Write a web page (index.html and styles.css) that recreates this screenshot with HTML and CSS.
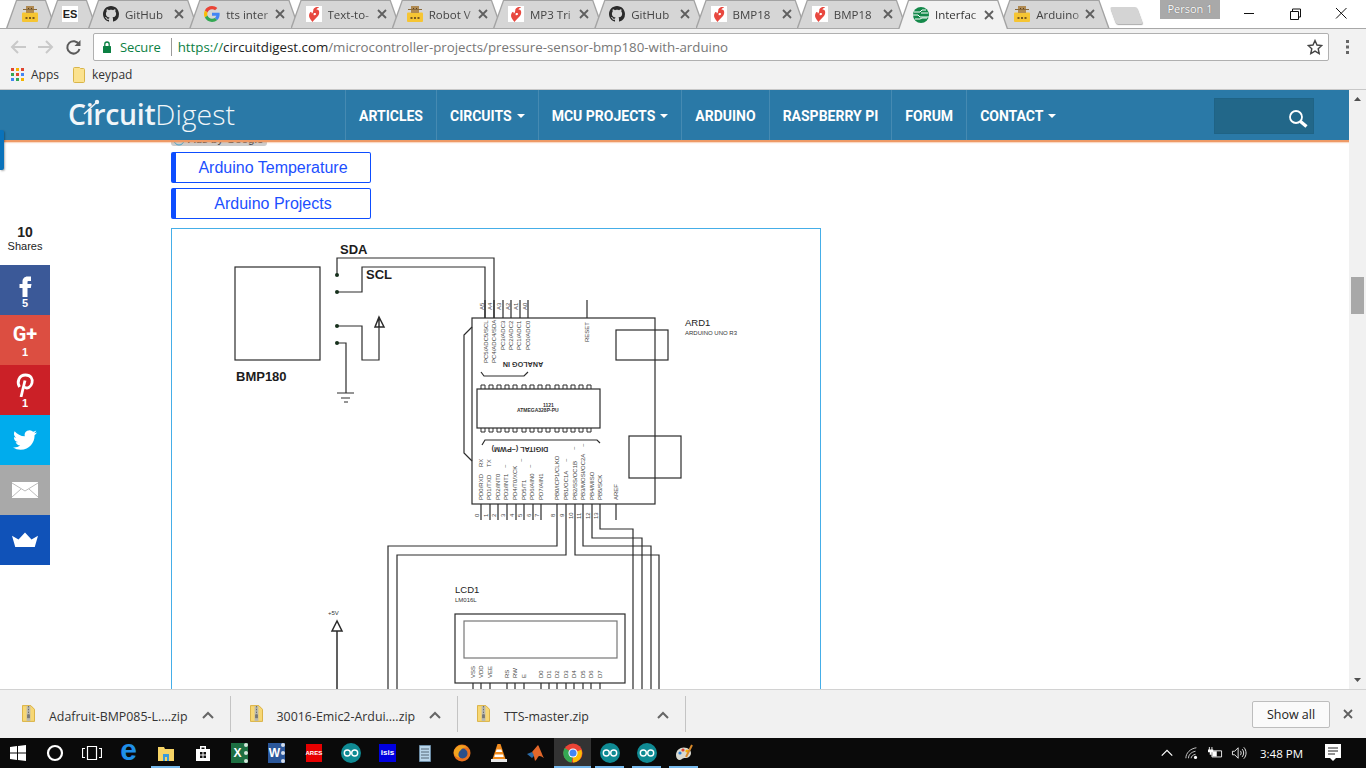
FILE: index.html
```html
<!DOCTYPE html>
<html lang="en">
<head>
<meta charset="utf-8">
<title>Interfacing BMP180</title>
<link rel="stylesheet" href="styles.css">
</head>
<body>
<svg class="defs" width="0" height="0" aria-hidden="true">
  <symbol id="i-robot" viewBox="0 0 16 16">
    <rect x="0" y="6.500" width="16" height="9.500" rx="1" fill="#f6c533"/>
    <rect x="4" y="0" width="8" height="7" fill="#b08a52"/>
    <rect x="1" y="3" width="14" height="1" fill="#8a6a3a"/>
    <rect x="6" y="2" width="1" height="1" fill="#5a4020"/><rect x="9" y="2" width="1" height="1" fill="#5a4020"/>
    <rect x="3.500" y="11" width="2" height="2" fill="#7a5a20"/><rect x="7" y="11" width="2" height="2" fill="#7a5a20"/><rect x="10.500" y="11" width="2" height="2" fill="#7a5a20"/>
  </symbol>
  <symbol id="i-gh" viewBox="0 0 16 16">
    <path fill="#2b2b2b" d="M8 0C3.58 0 0 3.58 0 8c0 3.54 2.29 6.53 5.47 7.59.4.07.55-.17.55-.38 0-.19-.01-.82-.01-1.49-2.01.37-2.53-.49-2.69-.94-.09-.23-.48-.94-.82-1.13-.28-.15-.68-.52-.01-.53.63-.01 1.08.58 1.23.82.72 1.21 1.87.87 2.33.66.07-.52.28-.87.51-1.07-1.78-.2-3.64-.89-3.64-3.95 0-.87.31-1.59.82-2.15-.08-.2-.36-1.02.08-2.12 0 0 .67-.21 2.2.82.64-.18 1.32-.27 2-.27.68 0 1.36.09 2 .27 1.53-1.04 2.2-.82 2.2-.82.44 1.1.16 1.92.08 2.12.51.56.82 1.27.82 2.15 0 3.07-1.87 3.75-3.65 3.95.29.25.54.73.54 1.48 0 1.07-.01 1.93-.01 2.2 0 .21.15.46.55.38A8.013 8.013 0 0016 8c0-4.42-3.58-8-8-8z"/>
  </symbol>
  <symbol id="i-google" viewBox="0 0 48 48">
    <path fill="#EA4335" d="M24 9.5c3.54 0 6.71 1.22 9.21 3.6l6.85-6.85C35.9 2.38 30.47 0 24 0 14.62 0 6.51 5.38 2.56 13.22l7.98 6.19C12.43 13.72 17.74 9.5 24 9.5z"/>
    <path fill="#4285F4" d="M46.98 24.55c0-1.57-.15-3.09-.38-4.55H24v9.02h12.94c-.58 2.96-2.26 5.48-4.78 7.18l7.73 6c4.51-4.18 7.09-10.36 7.09-17.65z"/>
    <path fill="#FBBC05" d="M10.53 28.59c-.48-1.45-.76-2.99-.76-4.59s.27-3.14.76-4.59l-7.98-6.19C.92 16.46 0 20.12 0 24c0 3.88.92 7.54 2.56 10.78l7.97-6.19z"/>
    <path fill="#34A853" d="M24 48c6.48 0 11.93-2.13 15.89-5.81l-7.73-6c-2.15 1.45-4.92 2.3-8.16 2.3-6.26 0-11.57-4.22-13.47-9.91l-7.98 6.19C6.51 42.62 14.62 48 24 48z"/>
  </symbol>
  <symbol id="i-spark" viewBox="0 0 16 16">
    <rect width="16" height="16" fill="#fff"/>
    <path fill="#e8483f" d="M6.5 16C4.5 13 2 11 3.5 7.5 4.3 5.6 5.6 5.6 5.8 7.4 7 7.2 7.2 5 7.4 3.2 8.6 1 11.4.8 13 1.2c-.9 1-2.6 1.2-2.6 2.4 1.5-.3 2.8.7 2.8 2.8 0 3.6-3.4 5.2-6.7 9.6z"/>
    <path fill="#fff" d="M7.6 7.5c1-.8 2.4-.5 2.4.6 0 1.2-1.8 1.5-2.4.9z"/>
  </symbol>
  <symbol id="i-globe" viewBox="0 0 16 16">
    <circle cx="8" cy="8" r="8" fill="#14894a"/>
    <path fill="none" stroke="#fff" stroke-width="1" d="M1 5h6l2-2h4M0 8h5l2 2h9M2 12h5l2-1h5M8 6h7"/>
  </symbol>
  <symbol id="i-x" viewBox="0 0 10 10">
    <path fill="none" stroke="#5f5f5f" stroke-width="1.8" d="M1 1l8 8M9 1l-8 8"/>
  </symbol>
  <symbol id="i-zip" viewBox="0 0 14 18">
    <path fill="#f7d774" stroke="#d8ae3c" d="M.5.5h9l4 4v13H.5z"/>
    <rect x="5" y="1" width="4" height="16" fill="#b9b9b0"/>
    <path stroke="#666" stroke-dasharray="1.5 1.5" d="M7 1v10"/>
    <rect x="5.5" y="10" width="3" height="4" fill="#777"/>
  </symbol>
  <symbol id="i-chev" viewBox="0 0 12 8">
    <path fill="none" stroke="#666" stroke-width="2" d="M1 7l5-5 5 5"/>
  </symbol>
  <symbol id="i-ino" viewBox="0 0 20 20">
    <circle cx="10" cy="10" r="10" fill="#0f8a93"/>
    <circle cx="6.3" cy="10" r="3" fill="none" stroke="#fff" stroke-width="1.4"/>
    <circle cx="13.7" cy="10" r="3" fill="none" stroke="#fff" stroke-width="1.4"/>
  </symbol>
</svg>

<header class="tabstrip">
  <div class="tab tab-mini tab-first"><svg class="fav"><use href="#i-robot"/></svg></div>
  <div class="tab tab-mini"><span class="fav fav-es">ES</span></div>
  <div class="tab"><svg class="fav"><use href="#i-gh"/></svg><span class="tab-title">GitHub</span><svg class="tab-x"><use href="#i-x"/></svg></div>
  <div class="tab"><svg class="fav"><use href="#i-google"/></svg><span class="tab-title">tts inter</span><svg class="tab-x"><use href="#i-x"/></svg></div>
  <div class="tab"><svg class="fav"><use href="#i-spark"/></svg><span class="tab-title">Text-to-</span><svg class="tab-x"><use href="#i-x"/></svg></div>
  <div class="tab"><svg class="fav"><use href="#i-robot"/></svg><span class="tab-title">Robot V</span><svg class="tab-x"><use href="#i-x"/></svg></div>
  <div class="tab"><svg class="fav"><use href="#i-spark"/></svg><span class="tab-title">MP3 Tri</span><svg class="tab-x"><use href="#i-x"/></svg></div>
  <div class="tab"><svg class="fav"><use href="#i-gh"/></svg><span class="tab-title">GitHub</span><svg class="tab-x"><use href="#i-x"/></svg></div>
  <div class="tab"><svg class="fav"><use href="#i-spark"/></svg><span class="tab-title">BMP18</span><svg class="tab-x"><use href="#i-x"/></svg></div>
  <div class="tab"><svg class="fav"><use href="#i-spark"/></svg><span class="tab-title">BMP18</span><svg class="tab-x"><use href="#i-x"/></svg></div>
  <div class="tab tab-active"><svg class="fav"><use href="#i-globe"/></svg><span class="tab-title">Interfac</span><svg class="tab-x"><use href="#i-x"/></svg></div>
  <div class="tab"><svg class="fav"><use href="#i-robot"/></svg><span class="tab-title">Arduino</span><svg class="tab-x"><use href="#i-x"/></svg></div>
  <div class="newtab"></div>
  <div class="person">Person 1</div>
  <div class="winctl">
    <svg class="wc" viewBox="0 0 46 28"><path stroke="#111" d="M18 13.5h10"/></svg>
    <svg class="wc" viewBox="0 0 46 28"><path fill="none" stroke="#111" d="M18.500 11.500h8v8h-8zM20.500 11.500v-2.500h8v8h-2"/></svg>
    <svg class="wc" viewBox="0 0 46 28"><path stroke="#111" d="M18 8l10.500 10.500M28.500 8L18 18.500"/></svg>
  </div>
</header>

<div class="toolbar">
  <svg class="navbtn" viewBox="0 0 27 20"><path fill="none" stroke="#c9c9c9" stroke-width="2" d="M21 10H7M13 4l-6 6 6 6"/></svg>
  <svg class="navbtn" viewBox="0 0 27 20"><path fill="none" stroke="#c9c9c9" stroke-width="2" d="M6 10h14M14 4l6 6-6 6"/></svg>
  <svg class="navbtn navbtn-wide" viewBox="0 0 29 20"><path fill="none" stroke="#5a5a5a" stroke-width="2" d="M20 7.500A6.200 6.200 0 1 0 20.500 12"/><path fill="#5a5a5a" d="M21.500 3v6h-6z"/></svg>
  <div class="omnibox">
    <svg class="lock" viewBox="0 0 8 12"><path fill="none" stroke="#0b8043" stroke-width="1.300" d="M1.800 5V3.200a2.200 2.200 0 0 1 4.400 0V5"/><rect y="5" width="8" height="7" rx=".5" fill="#0b8043"/></svg>
    <span class="secure">Secure</span>
    <span class="omni-sep"></span>
    <span class="url"><span class="url-scheme">https://</span><span class="url-host">circuitdigest.com</span>/microcontroller-projects/pressure-sensor-bmp180-with-arduino</span>
    <svg class="star" viewBox="0 0 16 16"><path fill="none" stroke="#444" stroke-width="1.400" d="M8 1.500l2 4.500 4.800.5-3.600 3.200 1 4.800L8 12.100l-4.200 2.400 1-4.800L1.200 6.500 6 6z"/></svg>
  </div>
  <svg class="menu" viewBox="0 0 37 20"><path fill="#666" d="M17 3h3v3h-3zM17 8.500h3v3h-3zM17 14h3v3h-3z"/></svg>
</div>

<nav class="bookmarks">
  <svg class="apps" viewBox="0 0 13 13">
    <path fill="#e0452f" d="M0 0h3v3H0z"/><path fill="#f4b400" d="M5 0h3v3H5z"/><path fill="#e0452f" d="M10 0h3v3h-3z"/>
    <path fill="#34a853" d="M0 5h3v3H0z"/><path fill="#e0452f" d="M5 5h3v3H5z"/><path fill="#4285f4" d="M10 5h3v3h-3z"/>
    <path fill="#4285f4" d="M0 10h3v3H0z"/><path fill="#34a853" d="M5 10h3v3H5z"/><path fill="#f4b400" d="M10 10h3v3h-3z"/>
  </svg>
  <span class="bm-label">Apps</span>
  <svg class="folder" viewBox="0 0 12 16"><path fill="#fbe28f" stroke="#d9b54a" d="M.5 1.500c0-.6.4-1 1-1h5l1 1h3c.6 0 1 .4 1 1v12c0 .6-.4 1-1 1h-9c-.6 0-1-.4-1-1z"/></svg>
  <span class="bm-label">keypad</span>
</nav>

<div class="viewport">
  <main class="page">
    <div class="site-header">
      <a class="logo"><svg class="logo-arc" viewBox="0 0 24 18"><path fill="none" stroke="#f1f6f9" stroke-width="1.500" d="M2 16L14 5"/><circle cx="15" cy="4" r="2.200" fill="#f1f6f9"/></svg><b class="logo-a">Circuit</b><span class="logo-b">Digest</span></a>
      <ul class="nav">
        <li>ARTICLES</li>
        <li>CIRCUITS<i class="caret"></i></li>
        <li>MCU PROJECTS<i class="caret"></i></li>
        <li>ARDUINO</li>
        <li>RASPBERRY PI</li>
        <li>FORUM</li>
        <li>CONTACT<i class="caret"></i></li>
      </ul>
      <div class="search">
        <svg class="search-ico" viewBox="0 0 20 20"><circle cx="8" cy="8" r="6" fill="none" stroke="#fff" stroke-width="1.800"/><path stroke="#fff" stroke-width="3.400" d="M12.500 12.500l6 5"/></svg>
      </div>
    </div>

    <div class="side-tab"></div>

    <aside class="share">
      <div class="share-count"><b>10</b><span>Shares</span></div>
      <div class="sbtn s-fb"><svg class="sico" viewBox="0 0 24 24"><path fill="#fff" d="M14.500 8h3.500V3.500h-3.500c-3 0-5 2.200-5 5V11H6.500v4h3v9h5v-9h3.300l.7-4h-4V9c0-.6.3-1 1-1z"/></svg><span class="snum">5</span></div>
      <div class="sbtn s-gp"><span class="gplus">G+</span><span class="snum">1</span></div>
      <div class="sbtn s-pin"><svg class="sico" viewBox="0 0 24 24"><path fill="none" stroke="#fff" stroke-width="2.800" d="M6.500 14C3.500 9 6 2 12.500 2c5.500 0 7.500 4 6.500 8-1 4-5 6.500-7.500 4"/><path fill="none" stroke="#fff" stroke-width="2.800" d="M12 7.500L8 24"/></svg><span class="snum">1</span></div>
      <div class="sbtn s-tw"><svg class="sico-big" viewBox="0 0 24 24"><path fill="#fff" d="M23.953 4.570a10 10 0 01-2.825.775 4.958 4.958 0 002.163-2.723c-.951.555-2.005.959-3.127 1.184a4.920 4.920 0 00-8.384 4.482C7.690 8.095 4.067 6.130 1.640 3.162a4.822 4.822 0 00-.666 2.475c0 1.710.870 3.213 2.188 4.096a4.904 4.904 0 01-2.228-.616v.060a4.923 4.923 0 003.946 4.827 4.996 4.996 0 01-2.212.085 4.936 4.936 0 004.604 3.417 9.867 9.867 0 01-6.102 2.105c-.390 0-.779-.023-1.170-.067a13.995 13.995 0 007.557 2.209c9.053 0 13.998-7.496 13.998-13.985 0-.210 0-.420-.015-.630A9.935 9.935 0 0024 4.590z"/></svg></div>
      <div class="sbtn s-mail"><svg class="sico-big" viewBox="0 0 26 16"><path fill="#fff" d="M0 0h26v16H0z"/><path fill="none" stroke="#bbb" d="M0 1l13 8 13-8M0 15l9-8M26 15l-9-8"/></svg></div>
      <div class="sbtn s-crown"><svg class="sico-big" viewBox="0 0 24 16"><path fill="#fff" d="M0 4l6 3.500L12 1l6 6.500L24 4l-3 10.500H3z"/></svg></div>
    </aside>

    <div class="content">
      <div class="ad-chip"><svg class="ad-i" viewBox="0 0 12 12"><circle cx="6" cy="6" r="5" fill="none" stroke="#4aa3c8"/></svg>Ads by Google</div>
      <a class="ad-btn">Arduino Temperature</a>
      <a class="ad-btn">Arduino Projects</a>
      <figure class="schematic">
        <svg class="sch" viewBox="172 229 648 470" width="648" height="470">
          <g class="w">
            <rect x="235" y="267" width="85" height="93"/>
            <path d="M337 275V258H494V318M337 292H362V267H485V318"/>
            <path d="M337 326H362V360H379V326M337 343H346V393"/>
            <path d="M337 393H354M341 398H350M344 402H348"/>
            <path class="heavy" d="M379 317L375 327H384ZM379 317V327"/>
            <rect x="472" y="318" width="183" height="186"/>
            <path d="M472 327L464 335V453L472 461"/>
            <rect x="616" y="330" width="52" height="30"/>
            <rect x="629" y="436" width="52" height="42"/>
            <rect x="477" y="389" width="123" height="39"/>
            <path class="thin" d="M481 389v-4h4v4M489 389v-4h4v4M497 389v-4h4v4M505 389v-4h4v4M513 389v-4h4v4M522 389v-4h4v4M530 389v-4h4v4M538 389v-4h4v4M546 389v-4h4v4M555 389v-4h4v4M563 389v-4h4v4M571 389v-4h4v4M579 389v-4h4v4M587 389v-4h4v4"/>
            <path class="thin" d="M481 428v4h4v-4M489 428v4h4v-4M497 428v4h4v-4M505 428v4h4v-4M513 428v4h4v-4M522 428v4h4v-4M530 428v4h4v-4M538 428v4h4v-4M546 428v4h4v-4M555 428v4h4v-4M563 428v4h4v-4M571 428v4h4v-4M579 428v4h4v-4M587 428v4h4v-4"/>
            <path d="M481 372L484 376H524L528 372M482 445L485 440H597L600 443"/>
            <path d="M503 300V318M511 300V318M520 300V318M528 300V318M587 300V318"/>
            <path d="M485 300V318M494 300V318"/>
            <path d="M481 504V520M490 504V520M498 504V520M507 504V520M516 504V520M524 504V520M533 504V520M541 504V520M616 504V520"/>
            <path d="M600 504V529H633V699M592 504V538H642V699M583 504V546H651V699M575 504V555H659V699"/>
            <path d="M557 504V546H388V699M566 504V555H397V699"/>
            <rect x="455" y="614" width="170" height="69"/>
            <rect class="grey" x="464" y="621" width="153" height="37"/>
            <path d="M473 683V699M481 683V699M490 683V699M507 683V699M515 683V699M524 683V699M541 683V699M549 683V699M557 683V699M566 683V699M574 683V699M583 683V699M591 683V699M600 683V699"/>
            <path class="heavy" d="M337 621L332 631H342ZM337 631V699"/>
          </g>
          <g class="dots">
            <circle cx="337" cy="275" r="2"/><circle cx="337" cy="292" r="2"/><circle cx="337" cy="326" r="2"/><circle cx="337" cy="343" r="2"/>
          </g>
          <g class="lbl-b">
            <text x="340" y="254">SDA</text>
            <text x="366" y="279">SCL</text>
            <text x="236" y="381">BMP180</text>
          </g>
          <g class="lbl-m">
            <text x="685" y="326">ARD1</text>
            <text x="455" y="593">LCD1</text>
          </g>
          <g class="lbl-s">
            <text x="685" y="335">ARDUINO UNO R3</text>
            <text x="455" y="602">LM016L</text>
            <text x="328" y="615">+5V</text>
            <text class="bold" x="517" y="412">ATMEGA328P-PU</text>
            <text class="bold" x="543" y="407">1121</text>
            <text class="bold big" transform="rotate(180 523 364)" x="523" y="366" text-anchor="middle">ANALOG IN</text>
            <text class="bold big" transform="rotate(180 520 449)" x="520" y="451" text-anchor="middle">DIGITAL (~PWM)</text>
          </g>
          <g class="lbl-r">
            <text transform="rotate(-90 484 310)" x="484" y="310">A5</text>
            <text transform="rotate(-90 492 310)" x="492" y="310">A4</text>
            <text transform="rotate(-90 501 310)" x="501" y="310">A3</text>
            <text transform="rotate(-90 510 310)" x="510" y="310">A2</text>
            <text transform="rotate(-90 518 310)" x="518" y="310">A1</text>
            <text transform="rotate(-90 527 310)" x="527" y="310">A0</text>
            <text transform="rotate(-90 488 363)" x="488" y="363">PC5/ADC5/SCL</text>
            <text transform="rotate(-90 496 363)" x="496" y="363">PC4/ADC4/SDA</text>
            <text transform="rotate(-90 505 350)" x="505" y="350">PC3/ADC3</text>
            <text transform="rotate(-90 513 350)" x="513" y="350">PC2/ADC2</text>
            <text transform="rotate(-90 521 350)" x="521" y="350">PC1/ADC1</text>
            <text transform="rotate(-90 530 350)" x="530" y="350">PC0/ADC0</text>
            <text transform="rotate(-90 589 342)" x="589" y="342">RESET</text>
            <text transform="rotate(-90 483 467)" x="483" y="467">RX</text>
            <text transform="rotate(-90 491 467)" x="491" y="467">TX</text>
            <text transform="rotate(-90 483 500)" x="483" y="500">PD0/RXD</text>
            <text transform="rotate(-90 491 500)" x="491" y="500">PD1/TXD</text>
            <text transform="rotate(-90 500 500)" x="500" y="500">PD2/INT0</text>
            <text transform="rotate(-90 508 500)" x="508" y="500">PD3/INT1</text>
            <text transform="rotate(-90 517 500)" x="517" y="500">PD4/T0/XCK</text>
            <text transform="rotate(-90 526 500)" x="526" y="500">PD5/T1</text>
            <text transform="rotate(-90 534 500)" x="534" y="500">PD6/AIN0</text>
            <text transform="rotate(-90 543 500)" x="543" y="500">PD7/AIN1</text>
            <text transform="rotate(-90 559 500)" x="559" y="500">PB0/ICP1/CLKO</text>
            <text transform="rotate(-90 568 500)" x="568" y="500">PB1/OC1A</text>
            <text transform="rotate(-90 577 500)" x="577" y="500">PB2/SS/OC1B</text>
            <text transform="rotate(-90 585 500)" x="585" y="500">PB3/MOSI/OC2A</text>
            <text transform="rotate(-90 594 500)" x="594" y="500">PB4/MISO</text>
            <text transform="rotate(-90 602 500)" x="602" y="500">PB5/SCK</text>
            <text transform="rotate(-90 618 500)" x="618" y="500">AREF</text>
            <text transform="rotate(-90 507 468)" x="507" y="468">~</text>
            <text transform="rotate(-90 523 462)" x="523" y="462">~</text>
            <text transform="rotate(-90 532 468)" x="532" y="468">~</text>
            <text transform="rotate(-90 568 462)" x="568" y="462">~</text>
            <text transform="rotate(-90 576 450)" x="576" y="450">~</text>
            <text transform="rotate(-90 585 447)" x="585" y="447">~</text>
            <text transform="rotate(-90 479 517)" x="479" y="517">0</text>
            <text transform="rotate(-90 488 517)" x="488" y="517">1</text>
            <text transform="rotate(-90 496 517)" x="496" y="517">2</text>
            <text transform="rotate(-90 505 517)" x="505" y="517">3</text>
            <text transform="rotate(-90 514 517)" x="514" y="517">4</text>
            <text transform="rotate(-90 522 517)" x="522" y="517">5</text>
            <text transform="rotate(-90 531 517)" x="531" y="517">6</text>
            <text transform="rotate(-90 539 517)" x="539" y="517">7</text>
            <text transform="rotate(-90 555 517)" x="555" y="517">8</text>
            <text transform="rotate(-90 564 517)" x="564" y="517">9</text>
            <text transform="rotate(-90 573 519)" x="573" y="519">10</text>
            <text transform="rotate(-90 581 519)" x="581" y="519">11</text>
            <text transform="rotate(-90 590 519)" x="590" y="519">12</text>
            <text transform="rotate(-90 598 519)" x="598" y="519">13</text>
            <text transform="rotate(-90 475 678)" x="475" y="678">VSS</text>
            <text transform="rotate(-90 483 678)" x="483" y="678">VDD</text>
            <text transform="rotate(-90 492 678)" x="492" y="678">VEE</text>
            <text transform="rotate(-90 509 678)" x="509" y="678">RS</text>
            <text transform="rotate(-90 517 678)" x="517" y="678">RW</text>
            <text transform="rotate(-90 526 678)" x="526" y="678">E</text>
            <text transform="rotate(-90 543 678)" x="543" y="678">D0</text>
            <text transform="rotate(-90 551 678)" x="551" y="678">D1</text>
            <text transform="rotate(-90 559 678)" x="559" y="678">D2</text>
            <text transform="rotate(-90 568 678)" x="568" y="678">D3</text>
            <text transform="rotate(-90 576 678)" x="576" y="678">D4</text>
            <text transform="rotate(-90 585 678)" x="585" y="678">D5</text>
            <text transform="rotate(-90 593 678)" x="593" y="678">D6</text>
            <text transform="rotate(-90 602 678)" x="602" y="678">D7</text>
          </g>
        </svg>
      </figure>
    </div>
  </main>
  <div class="scrollbar">
    <svg class="sb-arrow" viewBox="0 0 17 17"><path fill="#505050" d="M5 11l3.500-4 3.500 4z"/></svg>
    <div class="sb-thumb"></div>
    <svg class="sb-arrow sb-down" viewBox="0 0 17 17"><path fill="#505050" d="M5 6l3.500 4 3.500-4z"/></svg>
  </div>
</div>

<footer class="downloads">
  <div class="dl"><svg class="zip"><use href="#i-zip"/></svg><span class="dl-name">Adafruit-BMP085-L....zip</span><svg class="chev"><use href="#i-chev"/></svg></div>
  <div class="dl"><svg class="zip"><use href="#i-zip"/></svg><span class="dl-name">30016-Emic2-Ardui....zip</span><svg class="chev"><use href="#i-chev"/></svg></div>
  <div class="dl"><svg class="zip"><use href="#i-zip"/></svg><span class="dl-name">TTS-master.zip</span><svg class="chev"><use href="#i-chev"/></svg></div>
  <button class="showall">Show all</button>
  <svg class="dl-close"><use href="#i-x"/></svg>
</footer>

<div class="taskbar">
  <div class="tb"><svg class="tbi" viewBox="0 0 20 20"><path fill="#fff" d="M2 4l7-1v6.500H2zM10 2.900L18 2v7.500h-8zM2 10.500h7V17l-7-1zM10 10.500h8V18l-8-1.100z"/></svg></div>
  <div class="tb"><svg class="tbi" viewBox="0 0 20 20"><circle cx="10" cy="10" r="7" fill="none" stroke="#fff" stroke-width="2.200"/></svg></div>
  <div class="tb"><svg class="tbi" viewBox="0 0 20 20"><path fill="none" stroke="#fff" stroke-width="1.200" d="M5.500 3.500h9v13h-9zM3 5.500H.500v9H3M17 5.500h2.500v9H17"/></svg></div>
  <div class="tb"><span class="edge">e</span></div>
  <div class="tb tb-on"><svg class="tbi" viewBox="0 0 20 20"><path fill="#f6d365" d="M2 4h6l1 2h9v12H2z"/><path fill="#3a9bdc" d="M7 11h6v7h-2v-4H9v4H7z"/></svg></div>
  <div class="tb"><svg class="tbi" viewBox="0 0 20 20"><path fill="#fff" d="M3 6h14v12H3zM7 6V3h6v3h-1.500V4.500h-3V6z"/><path fill="#111" d="M7 9h2.500v2.500H7zM10.500 9H13v2.500h-2.500zM7 12.500h2.500V15H7zM10.500 12.500H13V15h-2.500z"/></svg></div>
  <div class="tb"><span class="app app-xl">X</span></div>
  <div class="tb"><span class="app app-wd">W</span></div>
  <div class="tb"><span class="app app-ares">ARES</span></div>
  <div class="tb"><svg class="tbi"><use href="#i-ino"/></svg></div>
  <div class="tb"><span class="app app-isis">isis</span></div>
  <div class="tb"><svg class="tbi" viewBox="0 0 20 20"><path fill="#b9d5ea" stroke="#6b8ba4" d="M4.500 2.500h11v16h-11z"/><path stroke="#567" d="M6 6h8M6 9h8M6 12h8M6 15h8"/></svg></div>
  <div class="tb"><svg class="tbi" viewBox="0 0 20 20"><circle cx="10" cy="10" r="8.500" fill="#e8711f"/><circle cx="10.500" cy="10.500" r="5" fill="#2a4f8c"/><path fill="#f2a31f" d="M2 8c2-6 9-8 14-3-4-1-6 0-7 2-2 1-4 5-1 8-4-1-7-3-6-7z"/></svg></div>
  <div class="tb"><svg class="tbi" viewBox="0 0 20 20"><path fill="#f28c1e" d="M8.500 1h3l5 15h-13z"/><path fill="#fff" d="M7.600 6.500h4.800l.8 2.500H6.800zM6 11.500h8l.7 2.500H5.300z"/><path fill="#e8e8e8" d="M2 16h16v3H2z"/></svg></div>
  <div class="tb"><svg class="tbi" viewBox="0 0 20 20"><path fill="#2c6aa5" d="M1 11l5-2 3 3-3 3z"/><path fill="#e3672a" d="M6 9l6-7c2 3 4 10 6 13-3-2-5-3-6-1-1 2-2 3-3 4-1-4-1-7-3-9z"/></svg></div>
  <div class="tb tb-on tb-hot"><svg class="tbi" viewBox="0 0 48 48"><circle cx="24" cy="24" r="23" fill="#ea4335"/><path fill="#fbbc05" d="M24 24l20-8a23 23 0 0 1-20 31z"/><path fill="#34a853" d="M24 24l-3 23A23 23 0 0 1 4 12z"/><circle cx="24" cy="24" r="11" fill="#fff"/><circle cx="24" cy="24" r="8.500" fill="#4285f4"/></svg></div>
  <div class="tb tb-on"><svg class="tbi"><use href="#i-ino"/></svg></div>
  <div class="tb tb-on"><svg class="tbi"><use href="#i-ino"/></svg></div>
  <div class="tb tb-on"><svg class="tbi" viewBox="0 0 20 20"><path fill="#d9d9cf" d="M2 12c0-6 6-9 11-7 5 2 5 7 2 9-3 2-5 0-7 2-2 2-6 1-6-4z"/><circle cx="6" cy="10" r="1.600" fill="#2d7dd2"/><circle cx="9" cy="7" r="1.600" fill="#e0452f"/><circle cx="13" cy="8" r="1.600" fill="#f4b400"/><path stroke="#d8892a" stroke-width="2" d="M12 14L18 2"/></svg></div>
  <div class="tray">
    <svg class="tr-ico tr-chev" viewBox="0 0 16 16"><path fill="none" stroke="#fff" stroke-width="1.400" d="M2 11l6-6 6 6"/></svg>
    <svg class="tr-ico tr-wifi" viewBox="0 0 16 16"><g fill="none" stroke="#ddd"><path d="M1 14C1 8 6 3 13 2"/><path d="M4 14c0-4 3-7 8-8"/><path d="M7 14c0-2 2-4 5-4.500"/></g><circle cx="12" cy="13" r="1.800" fill="#fff"/></svg>
    <svg class="tr-ico tr-bat" viewBox="0 0 18 16"><path fill="none" stroke="#fff" d="M5.500 5.500h11v7h-11z"/><path fill="#fff" d="M6 6h5v6H6zM2 1h1v3H2zM5 1h1v3H5zM1 4h6v3H5v3H3V7H1z"/></svg>
    <svg class="tr-ico tr-vol" viewBox="0 0 18 16"><path fill="none" stroke="#fff" d="M1.500 6H4l4-4v12L4 10H1.500zM10.500 5.500c1.300 1.500 1.300 3.500 0 5M12.500 3.500c2.400 2.600 2.400 6.400 0 9M14.500 1.500c3.400 3.800 3.400 9.200 0 13"/></svg>
    <span class="clock">3:48 PM</span>
    <svg class="tr-note" viewBox="0 0 16 18"><path fill="#fff" d="M0 0h16v14h-5l-3 3-3-3H0z"/><path stroke="#222" d="M3 4h10M3 7h10M3 10h7"/></svg>
  </div>
</div>
</body>
</html>
```
FILE: styles.css
```css
* { box-sizing: border-box; }
html, body { margin: 0; height: 768px; overflow: hidden; }
body { display: flex; flex-direction: column; width: 1366px; font-family: "Open Sans", "Liberation Sans", sans-serif; background: #fff; }
.defs { position: absolute; }

/* tab strip */
.tabstrip { display: flex; height: 29px; flex: none; background: #fff; position: relative; border-bottom: 1px solid #a8a8a8; }
.tab { position: relative; display: flex; align-items: center; width: 110.25px; height: 28px; padding-left: 15px; margin-left: -9px; flex: none; font-size: 11.500px; color: #444; }
.tab::before, .tab::after { content: ""; position: absolute; inset: 0; }
.tab::before { background: #a3a3a3; clip-path: polygon(0 100%, 10px 0, calc(100% - 10px) 0, 100% 100%); }
.tab::after { background: #d6d6d6; clip-path: polygon(1.5px 100%, 11px 1px, calc(100% - 11px) 1px, calc(100% - 1.5px) 100%); }
.tab > * { position: relative; z-index: 1; }
.tab-mini { width: 50px; }
.tab-first { margin-left: 6px; padding-left: 16px; }
.tab-active { z-index: 2; height: 29px; color: #333; }
.tab-active::after { background: #f2f2f2; clip-path: polygon(1.5px 100%, 11px 1px, calc(100% - 11px) 1px, calc(100% - 1.5px) 100%); }
.fav { width: 16px; height: 16px; flex: none; }
.fav-es { background: #fff; font: bold 11px/16px "Liberation Sans", sans-serif; color: #222; text-align: center; }
.tab-title { width: 45px; margin-left: 6px; flex: none; white-space: nowrap; -webkit-mask-image: linear-gradient(90deg, #000 80%, rgba(0,0,0,.35) 100%); mask-image: linear-gradient(90deg, #000 80%, rgba(0,0,0,.35) 100%); }
.tab-x { width: 10px; height: 10px; margin-left: 4px; flex: none; }
.newtab { width: 27px; height: 17px; margin: 7px 0 0 3px; flex: none; background: #d4d4d4; transform: skewX(20deg); border-radius: 2px; box-shadow: 0 1px 1px #aaa; }
.person { width: 60px; height: 19px; margin-left: auto; margin-right: 6px; background: #a9a9a9; color: #fff; font-size: 11px; line-height: 18px; text-align: center; text-shadow: 0 0 1px #555; flex: none; }
.winctl { display: flex; flex: none; margin-right: 2px; }
.wc { width: 46px; height: 28px; display: block; }

/* toolbar */
.toolbar { display: flex; align-items: flex-start; height: 33px; flex: none; padding: 4px 0 0 5px; background: #f2f2f2; }
.navbtn { width: 27px; height: 20px; margin-top: 4px; flex: none; }
.navbtn-wide { width: 29px; }
.omnibox { display: flex; align-items: center; flex: 1; height: 28px; margin-left: 5px; padding: 0 5px 0 9px; background: #fff; border: 1px solid #b0b0b0; border-radius: 2px; font-size: 13px; }
.lock { width: 8px; height: 12px; flex: none; }
.secure { margin-left: 9px; color: #0b8043; letter-spacing: -.1px; }
.omni-sep { width: 1px; height: 18px; margin: 0 6px 0 10px; background: #9a9a9a; }
.url { color: #777; white-space: nowrap; font-size: 13.300px; }
.url-scheme { color: #0b8043; }
.url-host { color: #222; }
.star { width: 16px; height: 16px; margin-left: auto; flex: none; }
.menu { width: 37px; height: 20px; margin-top: 4px; flex: none; }

/* bookmarks */
.bookmarks { display: flex; align-items: center; height: 28px; flex: none; padding: 0 0 2px 11px; background: #f2f2f2; border-bottom: 1px solid #c8c8c8; font-size: 12px; color: #333; }
.apps { width: 13px; height: 13px; flex: none; }
.bm-label { margin-left: 7px; }
.folder { width: 12px; height: 16px; margin-left: 14px; flex: none; }

/* page */
.viewport { display: flex; flex: none; height: 599px; }
.page { position: relative; flex: 1; overflow: hidden; background: #fff; }
.site-header { position: relative; z-index: 3; display: flex; height: 52px; background: #2a79a7; border-bottom: 2px solid #ee9a66; box-shadow: 0 1px 1px rgba(240,150,90,.35); }
.logo { position: relative; display: flex; align-items: baseline; width: 345px; height: 50px; padding: 5px 0 0 68px; color: #f1f6f9; font-family: "Open Sans", sans-serif; font-size: 28.400px; flex: none; }
.logo-a { font-weight: 600; letter-spacing: -.3px; }
.logo-b { font-weight: 300; letter-spacing: 0; }
.logo-arc { position: absolute; left: 82px; top: 8px; width: 24px; height: 18px; }
.nav { display: flex; margin: 0; padding: 0; list-style: none; }
.nav li { display: flex; align-items: center; height: 50px; padding: 1px 13px 0; border-left: 1px solid rgba(255,255,255,.13); color: #fff; font: 700 14px "Roboto", "Liberation Sans", sans-serif; white-space: nowrap; }
.caret { width: 0; height: 0; margin-left: 5px; border: 4px solid transparent; border-top-color: #fff; border-bottom: 0; }
.search { position: relative; width: 100px; height: 36px; margin: 8px 35px 0 auto; background: #226789; border: 1px solid #1f6385; flex: none; }
.search-ico { position: absolute; right: 5px; top: 10px; width: 20px; height: 20px; }
.side-tab { position: absolute; z-index: 4; left: 0; top: 40px; width: 4px; height: 40px; background: #0a72ba; border-radius: 0 2px 2px 0; box-shadow: 1px 1px 2px rgba(0,0,0,.3); }

.share { position: absolute; z-index: 2; left: 0; top: 134px; width: 50px; }
.share-count { display: flex; flex-direction: column; align-items: center; height: 41px; color: #222; font: 11px/13px "Liberation Sans", sans-serif; }
.share-count b { font-size: 14px; line-height: 16px; }
.sbtn { display: flex; flex-direction: column; align-items: center; justify-content: center; height: 50px; color: #fff; }
.s-fb { background: #3b5998; }
.s-gp { background: #dc4e41; }
.s-pin { background: #cb2027; }
.s-tw { background: #00aced; }
.s-mail { background: #a9a9a9; }
.s-crown { background: #1052b8; }
.sico { width: 24px; height: 24px; margin-top: 1px; }
.sico-big { width: 26px; height: 24px; }
.snum { font: bold 11px/12px "Liberation Sans", sans-serif; }
.gplus { font: 700 20px/24px "Roboto", sans-serif; margin-top: 0; }

.content { padding-left: 171px; }
.ad-chip { display: flex; align-items: center; width: 96px; height: 13px; margin-top: -9px; margin-bottom: 6px; padding-left: 2px; background: #ccc; border-radius: 0 0 3px 3px; color: #444; font: 11.500px/13px "Liberation Sans", sans-serif; white-space: nowrap; }
.ad-i { width: 12px; height: 12px; margin-right: 3px; flex: none; }
.ad-btn { display: block; width: 200px; height: 31px; margin-bottom: 5px; border: 1px solid #0d4dff; border-left-width: 5px; border-radius: 2px; color: #1c4fff; font: 16px/29px "Liberation Sans", sans-serif; text-align: center; }
.schematic { width: 650px; height: 480px; margin: 9px 0 0; border: 1px solid #45aee8; }
.sch { display: block; }
.w { fill: none; stroke: #2c2c2c; stroke-width: 1.200; }
.w .thin { stroke-width: 1; }
.w .heavy { stroke-width: 1.500; }
.w .grey { stroke: #777; }
.dots { fill: #16301c; }
.lbl-b { font: bold 13px "Liberation Sans", sans-serif; fill: #1c1c1c; }
.lbl-m { font: 9.500px "Liberation Sans", sans-serif; fill: #222; }
.lbl-s { font: 6px "Liberation Sans", sans-serif; fill: #333; }
.lbl-s .bold { font-weight: bold; font-size: 5px; }
.lbl-s .big { font-size: 7.200px; }
.lbl-r { font: 6px "Liberation Sans", sans-serif; fill: #444; }

.scrollbar { position: relative; width: 17px; flex: none; background: #f1f1f1; }
.sb-arrow { display: block; width: 17px; height: 17px; }
.sb-thumb { width: 13px; height: 37px; margin: 170px 0 0 2px; background: #a8a8a8; }
.sb-down { position: absolute; left: 0; bottom: 0; }

/* download shelf */
.downloads { display: flex; align-items: center; height: 49px; flex: none; padding-left: 3px; background: #f1f1f1; border-top: 1px solid #d2d2d2; font-size: 12.400px; color: #333; }
.dl { display: flex; align-items: center; width: 227.500px; height: 36px; padding-left: 19px; border-right: 1px solid #c4c4c4; flex: none; }
.zip { width: 13px; height: 17px; margin-top: -2px; flex: none; }
.dl-name { margin-left: 14px; padding-top: 4px; white-space: nowrap; }
.chev { width: 12px; height: 8px; margin: 2px 16px 0 auto; flex: none; }
.showall { width: 78px; height: 27px; margin-left: auto; background: #fafafa; border: 1px solid #bdbdbd; border-radius: 2px; font: 400 12.500px "Open Sans", sans-serif; color: #222; }
.dl-close { width: 10px; height: 10px; margin: 0 13px; flex: none; }

/* taskbar */
.taskbar { display: flex; align-items: stretch; height: 30px; flex: none; margin-left: -1px; background: #0a0a0a; }
.tb { position: relative; display: flex; align-items: center; justify-content: center; width: 37px; flex: none; }
.tb-on::after { content: ""; position: absolute; left: 4px; right: 4px; bottom: 0; height: 2px; background: #76b9ed; }
.tb-hot { background: #333; }
.tb-hot::after { left: 0; right: 0; }
.tbi { width: 20px; height: 20px; }
.edge { color: #1f8fe8; font: 700 30px/26px "Liberation Sans", sans-serif; margin-top: -6px; }
.app { display: block; width: 17px; height: 20px; color: #fff; text-align: center; font: 700 12px/20px "Liberation Sans", sans-serif; }
.app-xl { background: #1d6f42; border-right: 4px dotted #d5e8dc; }
.app-wd { background: #2b579a; border-right: 4px dotted #d5deec; }
.app-ares { background: #e60000; font-size: 6px; width: 16px; height: 18px; line-height: 18px; }
.app-isis { background: #0000e0; font-size: 8px; height: 18px; line-height: 18px; }
.tray { display: flex; align-items: center; margin-left: auto; color: #fff; }
.tr-ico { width: 14px; height: 14px; flex: none; }
.tr-chev { margin-right: 11px; }
.tr-wifi { margin-right: 8px; }
.tr-bat { width: 16px; margin-right: 8px; }
.tr-vol { width: 16px; margin-right: 13px; }
.clock { font-size: 11.500px; white-space: nowrap; }
.tr-note { width: 16px; height: 18px; margin: 0 25px 0 22px; flex: none; }
```
